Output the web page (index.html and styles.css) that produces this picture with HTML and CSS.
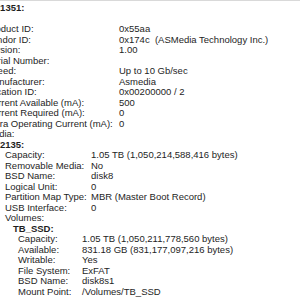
FILE: index.html
```html
<!DOCTYPE html>
<html>
  <head>
    <title>System Information - USB</title>
    <link rel="stylesheet" href="styles.css">
  </head>
  <body>
    <div class="pane">
      <div class="title t-dev">ASM1351:</div>
      <div class="spacer"></div>
      <div class="props p-dev">
        <span class="key">Product ID:</span><span>0x55aa</span>
        <span class="key">Vendor ID:</span><span>0x174c&nbsp; (ASMedia Technology Inc.)</span>
        <span class="key">Version:</span><span>1.00</span>
        <span class="key">Serial Number:</span><span></span>
        <span class="key">Speed:</span><span>Up to 10 Gb/sec</span>
        <span class="key">Manufacturer:</span><span>Asmedia</span>
        <span class="key">Location ID:</span><span>0x00200000 / 2</span>
        <span class="key">Current Available (mA):</span><span>500</span>
        <span class="key">Current Required (mA):</span><span>0</span>
        <span class="key">Extra Operating Current (mA):</span><span>0</span>
        <span class="key">Media:</span><span></span>
      </div>

      <div class="title t-media">ASMT2135:</div>
      <div class="props p-media">
        <span class="key">Capacity:</span><span>1.05 TB (1,050,214,588,416 bytes)</span>
        <span class="key">Removable Media:</span><span>No</span>
        <span class="key">BSD Name:</span><span>disk8</span>
        <span class="key">Logical Unit:</span><span>0</span>
        <span class="key">Partition Map Type:</span><span>MBR (Master Boot Record)</span>
        <span class="key">USB Interface:</span><span>0</span>
        <span class="key">Volumes:</span><span></span>
      </div>

      <div class="title t-vol">TB_SSD:</div>
      <div class="props p-vol">
        <span class="key">Capacity:</span><span>1.05 TB (1,050,211,778,560 bytes)</span>
        <span class="key">Available:</span><span>831.18 GB (831,177,097,216 bytes)</span>
        <span class="key">Writable:</span><span>Yes</span>
        <span class="key">File System:</span><span>ExFAT</span>
        <span class="key">BSD Name:</span><span>disk8s1</span>
        <span class="key">Mount Point:</span><span>/Volumes/TB_SSD</span>
      </div>
    </div>
  </body>
</html>
```

FILE: styles.css
```css
html, body{
  margin: 0;
  padding: 0;
  background: #fff;
}

body{
  width: 300px;
  height: 300px;
  overflow: hidden;
  border-top: 1px solid #d9d9d9;
  box-sizing: border-box;
}

.pane{
  padding-top: 2px;
  font-family: "Liberation Sans", Arial, sans-serif;
  font-size: 9.5px;
  line-height: 10.5px;
  color: #1e1e1e;
  white-space: nowrap;
}

.title{
  font-weight: bold;
  height: 10.5px;
}

.spacer{
  height: 10.5px;
}

.t-dev{
  margin-left: -21px;
}

.t-media{
  margin-left: -27px;
}

.t-vol{
  margin-left: 13px;
}

.props{
  display: grid;
  grid-auto-rows: 10.5px;
}

/* each group lines its values up on its own column */
.p-dev{
  margin-left: -14px;
  grid-template-columns: 133px 1fr;
}

.p-media{
  margin-left: 5px;
  grid-template-columns: 86px 1fr;
}

.p-vol{
  margin-left: 18px;
  grid-template-columns: 64px 1fr;
}
```
